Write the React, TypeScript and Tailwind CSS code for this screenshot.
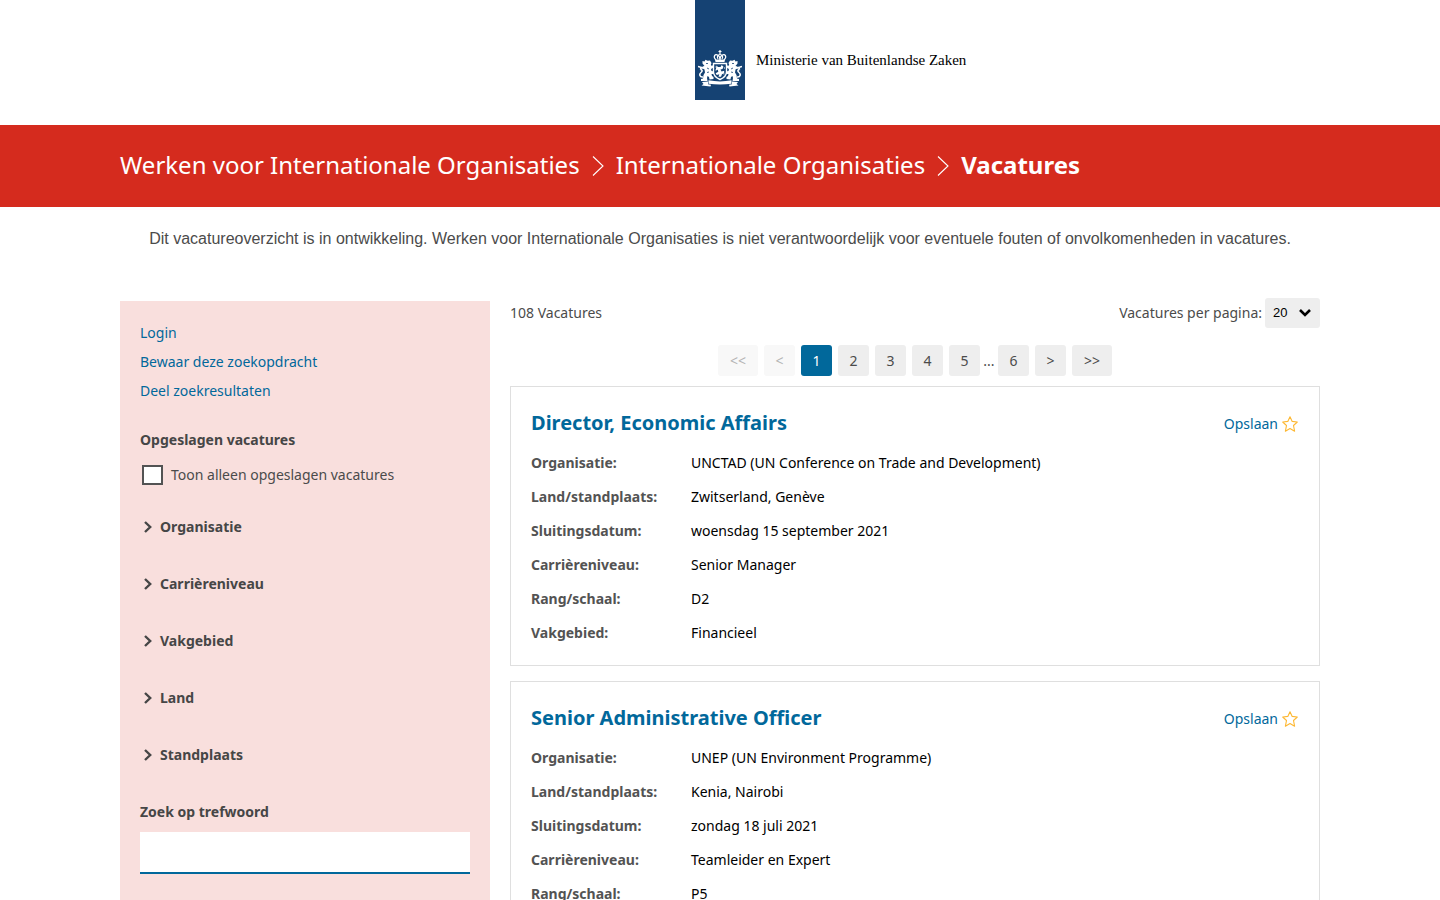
import React from "react";

type Vacancy = { title: string; rows: [string, string][] };

const vacancies: Vacancy[] = [
  {
    title: "Director, Economic Affairs",
    rows: [
      ["Organisatie:", "UNCTAD (UN Conference on Trade and Development)"],
      ["Land/standplaats:", "Zwitserland, Genève"],
      ["Sluitingsdatum:", "woensdag 15 september 2021"],
      ["Carrièreniveau:", "Senior Manager"],
      ["Rang/schaal:", "D2"],
      ["Vakgebied:", "Financieel"],
    ],
  },
  {
    title: "Senior Administrative Officer",
    rows: [
      ["Organisatie:", "UNEP (UN Environment Programme)"],
      ["Land/standplaats:", "Kenia, Nairobi"],
      ["Sluitingsdatum:", "zondag 18 juli 2021"],
      ["Carrièreniveau:", "Teamleider en Expert"],
      ["Rang/schaal:", "P5"],
    ],
  },
];

const filters = ["Organisatie", "Carrièreniveau", "Vakgebied", "Land", "Standplaats"];
const sideLinks = ["Login", "Bewaar deze zoekopdracht", "Deel zoekresultaten"];

function Lion() {
  return (
    <g>
      <path
        d="M4.500 13.500 L4.500 11 L6.500 11.500 L7.500 9.800 L9.500 10.800 L12 10.500 L13.500 13 L12.800 15 L14 16 L15.500 14.500 L16 17 L14 18.500 L13 19 L13.500 21 L16 21.500 L16 24 L13.500 24 L14 26 L15.500 27 L15.500 29 L11.500 29.500 L11 27 L9.500 26 L9 28 L9.500 31 L3 31 L3 29 L5 28.500 L5.500 25 L7 22.500 L6.500 19.500 L4.500 18.500 L4.500 16.500 L6.500 16 Z"
        fill="#fff"
      />
      <path
        d="M5 27 C1.500 27.500 1 24 3 22.500 C5 21 4 19.500 2.500 19.500 M0 16.500 L5 18 M2.500 19.500 L3 16.500"
        fill="none"
        stroke="#fff"
        strokeWidth="1.500"
      />
      <path d="M8 13.500 h2 M9 18 l2 1 M9 22.500 l2 -.5" fill="none" stroke="#154273" strokeWidth=".8" />
    </g>
  );
}

function CoatOfArms() {
  return (
    <svg viewBox="0 0 44 37" className="h-[37px] w-11" aria-hidden="true">
      <path d="M22 0 V4 M20.500 1.500 H23.500" stroke="#fff" strokeWidth="1.200" />
      <g fill="none" stroke="#fff" strokeWidth="1.200">
        <path d="M18 10 C14.500 6.500 17 3.500 20 5.200 C21.500 6 22 8 22 10 C22 8 22.500 6 24 5.200 C27 3.500 29.500 6.500 26 10" />
        <path d="M20 9 C18.500 6.500 20 4.500 22 4.500 C24 4.500 25.500 6.500 24 9" />
      </g>
      <path d="M17 9.500 H27 L26.500 12 H17.500 Z" fill="#fff" />
      <Lion />
      <g transform="matrix(-1 0 0 1 44 0)">
        <Lion />
      </g>
      <path d="M15.500 13.500 H28.500 V22 C28.500 26 25.500 28 22 29.500 C18.500 28 15.500 26 15.500 22 Z" fill="#154273" stroke="#fff" strokeWidth="1.400" />
      <path d="M18.500 15.500 l1.500 1.500 h2.500 l1.200 -2 1.800 1.800 -1 2.200 -2 .5 1 2 2.700 -.8 v2.500 l-2.200 1 -1 2.500 h-2.500 l.8 -2.500 -2.500 .8 -1.200 -1.800 2.700 -1.500 -.5 -2 -2 .5 z" fill="#fff" />
      <path d="M17.500 17 h1 M26 18 h1 M17.500 20 h1 M25.500 24 h1" stroke="#fff" strokeWidth="1" />
      <path d="M10.500 30.300 C18 31.800 26 31.800 33.500 30.300 V33.700 C26 34.800 18 34.800 10.500 33.700 Z" fill="#fff" />
      <path d="M4 32 L10 31.500 V34.200 L13 34.800 L12.500 36.600 L3.500 35.500 L5.500 34 Z M40 32 L34 31.500 V34.200 L31 34.800 L31.500 36.600 L40.500 35.500 L38.500 34 Z" fill="#fff" />
    </svg>
  );
}

function Separator() {
  return (
    <svg viewBox="0 0 12 20" className="mx-3 mt-px h-5 w-3 shrink-0" fill="none" stroke="#fff" strokeWidth="1.100" aria-hidden="true">
      <path d="M1 .5 L11 10 L1 19.500" />
    </svg>
  );
}

function Star() {
  return (
    <svg viewBox="0 0 16 16" className="h-4 w-4" fill="none" stroke="#fdb833" strokeWidth="1.100" strokeLinejoin="round" aria-hidden="true">
      <path d="M8 .8 L10.200 5.400 L15.300 6 L11.500 9.500 L12.600 15.200 L8 12.600 L3.400 15.200 L4.500 9.500 L.7 6 L5.800 5.400 Z" />
    </svg>
  );
}

function PageButton({ label, state, name }: { label: string; state?: "active" | "disabled"; name?: string }) {
  const tone =
    state === "active"
      ? "bg-[#01689b] text-white"
      : state === "disabled"
        ? "bg-[#f8f8f8] text-[#b4b4b4]"
        : "bg-[#eeeeee] text-[#4b4b4b]";
  return (
    <button
      type="button"
      aria-label={name}
      aria-current={state === "active" ? "page" : undefined}
      disabled={state === "disabled"}
      className={`h-[31px] rounded-[3px] text-center ${label.length > 1 ? "w-10" : "w-[31px]"} ${tone}`}
    >
      {label}
    </button>
  );
}

function Card({ vacancy }: { vacancy: Vacancy }) {
  return (
    <article className="border border-[#dfdfdf] px-5 pt-[19px] pb-[15px]">
      <div className="flex items-center justify-between pr-px">
        <h2 className="pb-0.5 text-[20px] leading-[34px] font-bold text-[#01689b]">
          <a href="#vacature">{vacancy.title}</a>
        </h2>
        <button type="button" className="flex items-center gap-1 text-[#01689b]">
          Opslaan <Star />
        </button>
      </div>
      <dl className="mt-1">
        {vacancy.rows.map(([term, value]) => (
          <div key={term} className="flex leading-[34px]">
            <dt className="w-40 shrink-0 font-bold text-[#535353]">{term}</dt>
            <dd className="text-black">{value}</dd>
          </div>
        ))}
      </dl>
    </article>
  );
}

export default function App() {
  return (
    <div className="min-h-screen bg-white font-['Noto_Sans',sans-serif] text-[14px] leading-5 text-[#4b4b4b]">
      <header className="grid grid-cols-[1fr_50px_1fr] pb-[25px]">
        <div className="col-start-2 flex h-[100px] items-end justify-center bg-[#154273] pb-[13px]">
          <CoatOfArms />
        </div>
        <p className="mt-[50px] pl-[11px] font-['Liberation_Serif',serif] text-[15px] leading-5 text-black">
          Ministerie van Buitenlandse Zaken
        </p>
      </header>

      <nav aria-label="Kruimelpad" className="bg-[#d52b1e] pb-0.5 text-[24px] leading-[80px] text-white">
        <div className="mx-auto flex max-w-[1200px] items-center">
          <a href="#home">Werken voor Internationale Organisaties</a>
          <Separator />
          <a href="#organisaties">Internationale Organisaties</a>
          <Separator />
          <span className="font-bold">Vacatures</span>
        </div>
      </nav>

      <p className="pt-5 text-center font-['Liberation_Sans',sans-serif] text-[16px] leading-6 text-[#4b4b4b]">
        Dit vacatureoverzicht is in ontwikkeling. Werken voor Internationale Organisaties is niet verantwoordelijk voor
        eventuele fouten of onvolkomenheden in vacatures.
      </p>

      <div className="mx-auto mt-[47px] flex max-w-[1200px] gap-5">
        <aside className="mt-[3px] w-[370px] shrink-0 bg-[#f9dfdd] px-5 pt-[17px]">
          <ul className="leading-[29px] text-[#01689b]">
            {sideLinks.map((link) => (
              <li key={link}>
                <a href="#account">{link}</a>
              </li>
            ))}
          </ul>
          <h3 className="mt-5 leading-[30px] font-bold text-[#464646]">Opgeslagen vacatures</h3>
          <label className="mt-[9px] flex items-center pl-0.5 leading-[22px]">
            <input type="checkbox" className="mr-2 h-5 w-[21px] appearance-none border-2 border-[#535353] bg-white" />
            Toon alleen opgeslagen vacatures
          </label>
          <div className="mt-3">
            {filters.map((filter) => (
              <button
                key={filter}
                type="button"
                aria-expanded="false"
                className="flex h-[57px] w-full items-center text-left font-bold text-[#464646]"
              >
                <svg viewBox="0 0 8 12" className="mr-2 ml-1 h-3 w-2" fill="none" stroke="#464646" strokeWidth="2.400" aria-hidden="true">
                  <path d="M1 1 L6.200 6 L1 11" />
                </svg>
                {filter}
              </button>
            ))}
          </div>
          <label htmlFor="keyword" className="mt-[19px] block font-bold text-[#464646]">
            Zoek op trefwoord
          </label>
          <input id="keyword" type="text" className="mt-2.5 block h-[42px] w-full border-b-2 border-[#01689b] bg-white px-2 outline-none" />
        </aside>

        <main className="min-w-0 grow">
          <div className="flex items-center justify-between">
            <p>108 Vacatures</p>
            <div className="flex items-center gap-[3px]">
              <label htmlFor="per-page">Vacatures per pagina:</label>
              <div className="grid items-center">
                <select
                  id="per-page"
                  className="col-start-1 row-start-1 h-[30px] w-[55px] appearance-none rounded-[3px] bg-[#eeeeee] pl-2 font-['Liberation_Sans',sans-serif] text-[13px] text-black"
                >
                  <option>20</option>
                </select>
                <svg viewBox="0 0 12 8" className="pointer-events-none col-start-1 row-start-1 mr-[9px] h-2 w-3 justify-self-end" fill="none" stroke="#000" strokeWidth="2.600" aria-hidden="true">
                  <path d="M1 1 L6 6 L11 1" />
                </svg>
              </div>
            </div>
          </div>

          <nav aria-label="Paginering" className="mt-[17px] flex justify-center gap-1.5">
            <PageButton label="<<" state="disabled" name="Eerste" />
            <PageButton label="<" state="disabled" name="Vorige" />
            <PageButton label="1" state="active" />
            <PageButton label="2" />
            <PageButton label="3" />
            <PageButton label="4" />
            <div className="flex items-center">
              <PageButton label="5" />
              <span className="w-[18px] text-center">...</span>
              <PageButton label="6" />
            </div>
            <PageButton label=">" name="Volgende" />
            <PageButton label=">>" name="Laatste" />
          </nav>

          <div className="mt-2.5 flex flex-col gap-[15px]">
            {vacancies.map((vacancy) => (
              <Card key={vacancy.title} vacancy={vacancy} />
            ))}
          </div>
        </main>
      </div>
    </div>
  );
}
